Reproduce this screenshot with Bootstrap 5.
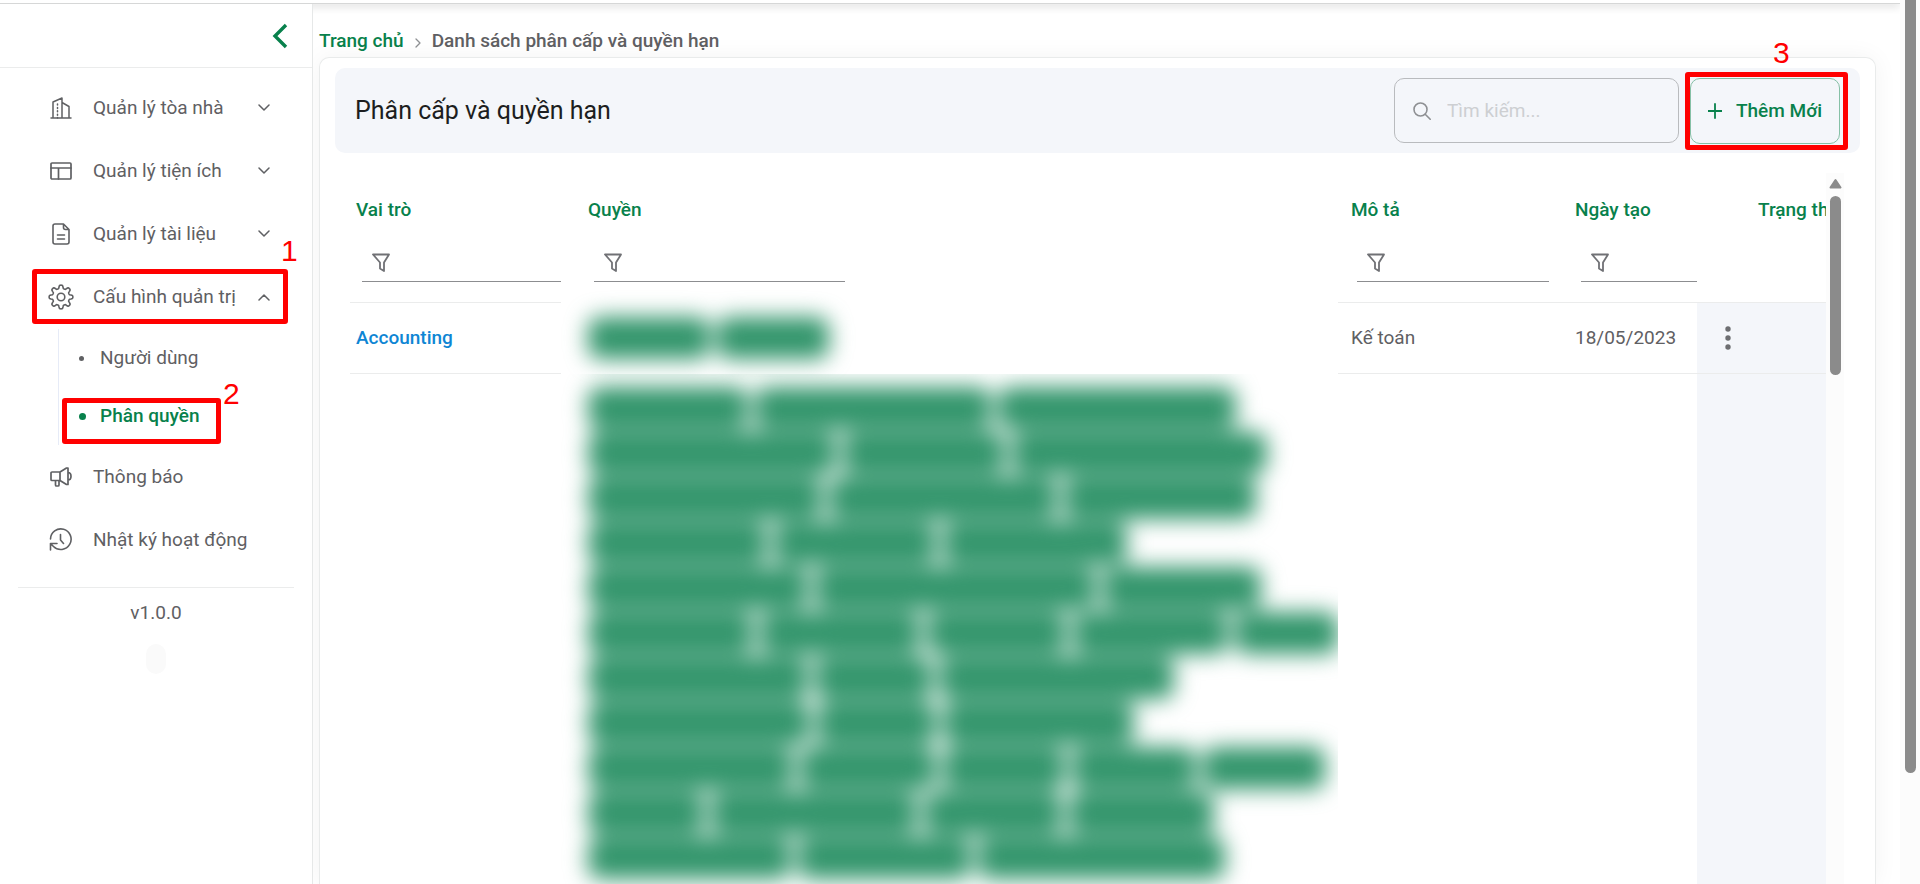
<!DOCTYPE html>
<html lang="vi">
<head>
<meta charset="utf-8">
<meta name="viewport" content="width=device-width, initial-scale=1">
<title>Phân cấp và quyền hạn</title>
<link href="https://cdn.jsdelivr.net/npm/bootstrap@5.3.0/dist/css/bootstrap.min.css" rel="stylesheet">
<style>
:root { --brand: #08814c; --ink: #5f6063; --panel: #f4f6fa; --rule: #ebecec; --thumb: #8b8b8b; --red: #ff0000; }
body { font-family: Roboto, "Noto Sans", sans-serif; font-size: 19px; line-height: 24px; color: var(--ink); background: #fff; }
a { color: inherit; text-decoration: none; }
svg { display: block; fill: none; stroke: currentColor; stroke-linecap: round; stroke-linejoin: round; }
.fw-medium-text { font-weight: 500; }
.brand-text { color: var(--brand); }

.top-strip { height: 4px; border-bottom: 1px solid #d6d7d7; background: #fff; box-shadow: 0 2px 8px rgba(0,0,0,.2); z-index: 1; }
.side { width: 313px; border-right: 1px solid #e6e8e8; background: #fff; z-index: 2; }
.side-head { height: 64px; border-bottom: 1px solid var(--rule); padding-right: 23px; }
.side-head svg { stroke-linecap: butt; stroke-linejoin: miter; }
.side-nav { padding-top: 8px; }
.side-link { height: 63px; width: 100%; padding: 0 42px 0 48px; border: 0; background: none; color: inherit; text-align: left; }
.side-link .glyph { width: 26px; margin-right: 19px; display: flex; justify-content: center; }
.sub-menu { margin: 1px 0 0 58px; border-left: 1px solid #e6ebf7; }
.sub-link { height: 58px; padding-left: 20px; }
.bullet { width: 5px; height: 5px; border-radius: 50%; background: currentColor; margin-right: 16px; }
.sub-link.active .bullet { width: 7px; height: 7px; margin-right: 14px; }
.sub-link.active { color: var(--brand); font-weight: 500; }
.side-foot { margin: 16px 18px 0; border-top: 1px solid var(--rule); padding-top: 13px; }
.blob { width: 20px; height: 30px; border-radius: 10px; background: #fafafa; margin-top: 19px; }

.callout { position: absolute; border: 5px solid var(--red); border-radius: 3px; pointer-events: none; }
.callout b { position: absolute; font: 30px/30px "Liberation Sans", sans-serif; color: var(--red); }
.callout-menu { left: 32px; right: 24px; top: 4px; bottom: 4px; }
.callout-menu b { left: 244px; bottom: 53px; }
.callout-sub { left: 3px; width: 159px; top: 11px; height: 46px; }
.callout-sub b { left: 156px; bottom: 30px; }
.callout-add { inset: -6px -8px -6px -5px; }
.callout-add b { left: 83px; bottom: 77px; }

.crumbs { padding: 25px 0 4px 6px; }
.crumbs svg { margin: 3px 11px 0 11px; color: #8e9093; }
.sheet { margin: 0 24px 0 6px; border: 1px solid #e9ebeb; border-bottom: 0; border-radius: 10px 10px 0 0; box-shadow: 0 0 24px rgba(0,0,0,.05); padding: 10px 15px 0; background: #fff; }
.sheet-head { height: 85px; border-radius: 10px; background: var(--panel); padding: 0 20px; }
.sheet-head h1 { font-size: 25px; line-height: 32px; font-weight: 400; color: #1d1e20; margin: 0; }
.search-box { width: 285px; height: 65px; border: 1px solid #b9bbbe; border-radius: 10px; padding: 0 18px; margin-right: 11px; color: #8e9093; }
.search-box input { border: 0; background: none; outline: 0; padding: 0 0 0 16px; width: 100%; color: var(--ink); }
.search-box input::placeholder { color: #cdcfd2; opacity: 1; }
.add-btn { width: 150px; height: 66px; border: 1px solid #86c0a6; border-radius: 10px; background: none; color: var(--brand); font-weight: 500; gap: 14px; }

.grid-wrap { margin: 20px 16px 0 15px; }
.grid-view { overflow: hidden; }
.role-table { table-layout: fixed; width: 100%; height: 100%; border-collapse: collapse; }
.role-table th { font-weight: 500; color: var(--brand); padding: 25px 0 20px 6px; height: 129px; vertical-align: top; white-space: nowrap; border-bottom: 1px solid var(--rule); }
.role-table td { padding: 0 0 0 6px; vertical-align: middle; border-bottom: 1px solid var(--rule); }
.role-table .after-perm { padding-left: 13px; }
.role-table .perm { padding-left: 27px; border-bottom-color: transparent; }
.role-table .frozen { background: var(--panel); padding-left: 21px; }
.role-table .row-one td { height: 71px; }
.role-table .row-two td { vertical-align: top; border-bottom: 0; }
.role-link { color: #0e86d4; font-weight: 500; }
.filter-box { margin: 22px 0 0 6px; height: 38px; border-bottom: 1px solid #8c8d90; padding-left: 10px; color: #707175; }
.filter-box input { width: 100%; min-width: 0; border: 0; outline: 0; background: none; padding: 0 0 0 8px; color: var(--ink); font-weight: 400; }
.w-perm { width: 251px; }
.desc-head { padding-right: 13px; }
.status-head { padding-left: 55px; }
.menu-btn { display: block; border: 0; background: none; padding: 0; color: #6d6e71; }
.solid-glyph { fill: currentColor; stroke: none; }
.chip-set { filter: blur(11px); }
.chip-line { gap: 7px; }
.chip { height: 42px; border-radius: 12px; background: #32956b; }
.row-two .chip-set { padding-top: 13px; display: flex; flex-direction: column; gap: 3px; }

.bar-track { width: 18px; background: #fcfcfc; }
.bar-track .thumb { width: 11px; border-radius: 6px; background: var(--thumb); }
.grid-track { padding-top: 5px; }
.grid-track svg { color: var(--thumb); fill: currentColor; }
.grid-track .thumb { height: 179px; margin-top: 7px; }
.page-track { width: 20px; padding-left: 5px; }
.page-track .thumb { height: 87.4%; border-radius: 0 0 6px 6px; }
</style>
</head>
<body>
<div class="d-flex vh-100 overflow-hidden">
  <div class="d-flex flex-column flex-grow-1 overflow-hidden position-relative">
    <div class="top-strip position-relative flex-shrink-0"></div>
    <div class="d-flex flex-grow-1">
      <aside class="side flex-shrink-0 position-relative">
        <div class="side-head d-flex align-items-center justify-content-end">
          <button class="btn p-0 border-0 brand-text" type="button" aria-label="Thu gọn">
            <svg width="20" height="28" viewBox="0 0 20 28" stroke-width="3.400"><path d="M17 3 6 14 17 25"/></svg>
          </button>
        </div>
        <nav class="side-nav">
          <button class="side-link d-flex align-items-center" type="button">
            <span class="glyph"><svg width="22" height="22" viewBox="0 0 22 22" stroke-width="1.500"><path d="M1 21h20M3 21V5l9-4v20M12 5.500l7 4V21"/><path d="M7.500 7v14" stroke-dasharray="1 2.400"/></svg></span>
            <span class="flex-grow-1">Quản lý tòa nhà</span>
            <svg width="12" height="8" viewBox="0 0 12 8" stroke-width="1.500"><path d="m1 1 5 5 5-5"/></svg>
          </button>
          <button class="side-link d-flex align-items-center" type="button">
            <span class="glyph"><svg width="22" height="18" viewBox="0 0 22 18" stroke-width="1.700"><rect x="1" y="1" width="20" height="16" rx="1"/><path d="M1 6h20M8.500 6v11"/></svg></span>
            <span class="flex-grow-1">Quản lý tiện ích</span>
            <svg width="12" height="8" viewBox="0 0 12 8" stroke-width="1.500"><path d="m1 1 5 5 5-5"/></svg>
          </button>
          <button class="side-link d-flex align-items-center" type="button">
            <span class="glyph"><svg width="18" height="22" viewBox="0 0 18 22" stroke-width="1.600"><path d="M11.500 1H3a2 2 0 0 0-2 2v16a2 2 0 0 0 2 2h12a2 2 0 0 0 2-2V6.500zM11.500 1v3.500a2 2 0 0 0 2 2H17M5.500 12h7M5.500 16h7"/></svg></span>
            <span class="flex-grow-1">Quản lý tài liệu</span>
            <svg width="12" height="8" viewBox="0 0 12 8" stroke-width="1.500"><path d="m1 1 5 5 5-5"/></svg>
          </button>
          <div class="position-relative">
            <button class="side-link d-flex align-items-center" type="button" aria-expanded="true">
              <span class="glyph"><svg width="26" height="26" viewBox="0 0 26 26" stroke-width="1.600"><circle cx="13" cy="13" r="3.800"/><path id="gear"/></svg></span>
              <span class="flex-grow-1">Cấu hình quản trị</span>
              <svg width="12" height="8" viewBox="0 0 12 8" stroke-width="1.500"><path d="m1 7 5-5 5 5"/></svg>
            </button>
            <div class="callout callout-menu"><b>1</b></div>
          </div>
          <div class="sub-menu">
            <a class="sub-link d-flex align-items-center" href="#"><span class="bullet"></span>Người dùng</a>
            <div class="position-relative">
              <a class="sub-link active d-flex align-items-center" href="#"><span class="bullet"></span>Phân quyền</a>
              <div class="callout callout-sub"><b>2</b></div>
            </div>
          </div>
          <a class="side-link d-flex align-items-center" href="#">
            <span class="glyph"><svg width="22" height="20" viewBox="0 0 22 20" stroke-width="1.700"><path d="M10 5H2a1 1 0 0 0-1 1v6.500a1 1 0 0 0 1 1h8M10 5v8.500M10 5l6.500-4H18v16.500h-1.500L10 13.500M5.500 13.500V18a1 1 0 0 0 1 1h1.500a1 1 0 0 0 1-1v-4.500M18 5.500c4 0 4 7.500 0 7.500"/></svg></span>
            <span>Thông báo</span>
          </a>
          <a class="side-link d-flex align-items-center" href="#">
            <span class="glyph"><svg width="24" height="24" viewBox="0 0 24 24" stroke-width="1.600"><path d="M1.500 11A10.300 10.300 0 1 1 4.500 18.500M1.500 22v-6.500H8M1.500 15.500 4.500 18.500M11.500 6.500v5.500l3 3.500"/></svg></span>
            <span>Nhật ký hoạt động</span>
          </a>
        </nav>
        <div class="side-foot d-flex flex-column align-items-center">
          <span>v1.0.0</span>
          <span class="blob"></span>
        </div>
      </aside>

      <main class="flex-grow-1 d-flex flex-column overflow-hidden">
        <nav class="crumbs d-flex align-items-center fw-medium-text" aria-label="breadcrumb">
          <a class="brand-text" href="#">Trang chủ</a>
          <svg width="6" height="10" viewBox="0 0 6 10" stroke-width="1.300"><path d="m1 1 4 4-4 4"/></svg>
          <span>Danh sách phân cấp và quyền hạn</span>
        </nav>
        <section class="sheet flex-grow-1 d-flex flex-column">
          <header class="sheet-head d-flex align-items-center flex-shrink-0">
            <h1 class="flex-grow-1">Phân cấp và quyền hạn</h1>
            <label class="search-box d-flex align-items-center">
              <svg class="flex-shrink-0" width="18" height="18" viewBox="0 0 18 18" stroke-width="1.600"><circle cx="7.500" cy="7.500" r="6.500"/><path d="m12.200 12.200 5 5"/></svg>
              <input type="text" placeholder="Tìm kiếm..." aria-label="Tìm kiếm">
            </label>
            <div class="position-relative">
              <button class="add-btn d-flex align-items-center justify-content-center p-0" type="button">
                <svg width="14" height="16" viewBox="0 0 14 16" stroke-width="1.800"><path d="M7 1v14M0 8h14"/></svg>Thêm Mới
              </button>
              <div class="callout callout-add"><b>3</b></div>
            </div>
          </header>
          <div class="grid-wrap flex-grow-1 d-flex">
            <div class="grid-view flex-grow-1">
              <table class="role-table">
                <colgroup><col style="width:211px"><col><col style="width:224px"><col style="width:135px"><col style="width:129px"></colgroup>
                <thead>
                  <tr>
                    <th scope="col">Vai trò
                      <label class="filter-box d-flex align-items-center"><svg class="flex-shrink-0" width="18" height="19" viewBox="0 0 18 19" stroke-width="1.800"><path d="M1 1.500h16l-5 8V18l-4-2.500v-6z"/></svg><input type="text" aria-label="Lọc vai trò"></label></th>
                    <th scope="col" class="perm">Quyền
                      <label class="filter-box w-perm d-flex align-items-center"><svg class="flex-shrink-0" width="18" height="19" viewBox="0 0 18 19" stroke-width="1.800"><path d="M1 1.500h16l-5 8V18l-4-2.500v-6z"/></svg><input type="text" aria-label="Lọc quyền"></label></th>
                    <th scope="col" class="after-perm"><div class="desc-head">Mô tả
                      <label class="filter-box d-flex align-items-center"><svg class="flex-shrink-0" width="18" height="19" viewBox="0 0 18 19" stroke-width="1.800"><path d="M1 1.500h16l-5 8V18l-4-2.500v-6z"/></svg><input type="text" aria-label="Lọc mô tả"></label></div></th>
                    <th scope="col" class="after-perm">Ngày tạo
                      <label class="filter-box d-flex align-items-center"><svg class="flex-shrink-0" width="18" height="19" viewBox="0 0 18 19" stroke-width="1.800"><path d="M1 1.500h16l-5 8V18l-4-2.500v-6z"/></svg><input type="text" aria-label="Lọc ngày tạo"></label></th>
                    <th scope="col" class="overflow-hidden"><div class="status-head">Trạng thái</div></th>
                  </tr>
                </thead>
                <tbody>
                  <tr class="row-one">
                    <td><a class="role-link" href="#">Accounting</a></td>
                    <td class="perm"><div class="chip-set" data-rows="122,112"></div></td>
                    <td class="after-perm">Kế toán</td>
                    <td class="after-perm">18/05/2023</td>
                    <td class="frozen"><button class="menu-btn" type="button" aria-label="Thao tác"><svg class="solid-glyph" width="20" height="24" viewBox="0 0 20 24"><circle cx="10" cy="3" r="2.700"/><circle cx="10" cy="12" r="2.700"/><circle cx="10" cy="21" r="2.700"/></svg></button></td>
                  </tr>
                  <tr class="row-two">
                    <td></td>
                    <td class="perm overflow-hidden"><div class="chip-set" data-rows="160,236,238|248,162,255|234,228,192|179,162,184|220,281,158|165,160,139,155,103|220,117,235|222,119,191|205,136,122,124,122|116,206,138,145|203,173,247"></div></td>
                    <td></td>
                    <td></td>
                    <td class="frozen"></td>
                  </tr>
                </tbody>
              </table>
            </div>
            <div class="bar-track grid-track d-flex flex-column align-items-center flex-shrink-0">
              <svg width="13" height="11" viewBox="0 0 13 11" stroke-width="2"><path d="M6.500 2 11.500 9.500h-10z"/></svg>
              <div class="thumb"></div>
            </div>
          </div>
        </section>
      </main>
    </div>
  </div>
  <div class="bar-track page-track flex-shrink-0"><div class="thumb"></div></div>
</div>
<script src="https://cdn.jsdelivr.net/npm/bootstrap@5.3.0/dist/js/bootstrap.bundle.min.js"></script>
<script>
// Permission chips: one line per group, widths from the list
document.querySelectorAll('.chip-set').forEach(function (set) {
  set.dataset.rows.split('|').forEach(function (row) {
    var line = document.createElement('div');
    line.className = 'chip-line d-flex';
    row.split(',').forEach(function (w) {
      var chip = document.createElement('span');
      chip.className = 'chip flex-shrink-0';
      chip.style.width = w + 'px';
      line.appendChild(chip);
    });
    set.appendChild(line);
  });
});
// Eight-tooth gear outline
(function () {
  var d = '', n = 96;
  for (var i = 0; i < n; i++) {
    var a = i / n * Math.PI * 2, c = Math.cos(8 * a);
    var r = 10.2 + 1.700 * Math.tanh(2.2 * c);
    d += (i ? 'L' : 'M') + (13 + r * Math.sin(a)).toFixed(2) + ' ' + (13 - r * Math.cos(a)).toFixed(2);
  }
  document.getElementById('gear').setAttribute('d', d + 'z');
})();
</script>
</body>
</html>
